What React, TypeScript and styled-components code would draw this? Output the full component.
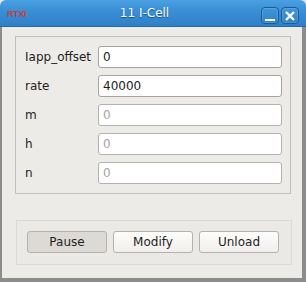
import React from 'react';
import styled, { createGlobalStyle } from 'styled-components';

const GlobalStyle = createGlobalStyle`
  html, body {
    margin: 0;
    padding: 0;
    background: #e4e4e4;
  }
`;

const Window = styled.div`
  width: 306px;
  height: 282px;
  box-sizing: border-box;
  display: flex;
  flex-direction: column;
  font-family: 'DejaVu Sans', sans-serif;
  font-size: 12px;
  color: #1e1e1e;
`;

const TitleBar = styled.div`
  height: 27px;
  flex-shrink: 0;
  position: relative;
  display: flex;
  align-items: center;
  border-radius: 6px 6px 0 0;
  background: linear-gradient(#4aa0e2, #3a8fd5 40%, #2f80c8);
  border-bottom: 1px solid #246aa8;
  box-sizing: border-box;
`;

const Brand = styled.span`
  position: absolute;
  left: 7px;
  top: 9px;
  font-family: 'Liberation Sans', sans-serif;
  font-weight: bold;
  font-size: 9px;
  line-height: 10px;
  letter-spacing: -0.3px;
  color: #cc3b34;
`;

const Title = styled.span`
  flex: 1;
  text-align: center;
  color: #fff;
  font-size: 12px;
  padding-right: 17px;
  text-shadow: 0 1px 1px rgba(0, 0, 0, 0.45);
`;

const TitleButtons = styled.div`
  position: absolute;
  right: 7px;
  top: 7px;
  display: flex;
  gap: 2px;
`;

const TitleButton = styled.div`
  width: 18px;
  height: 17px;
  box-sizing: border-box;
  border: 1px solid #1c5a92;
  border-radius: 4px;
  background: linear-gradient(#3f95da, #2f82c9);
  box-shadow: inset 0 0 0 1px rgba(255, 255, 255, 0.15);
  display: flex;
  align-items: center;
  justify-content: center;
`;

const Body = styled.div`
  flex: 1;
  display: flex;
  flex-direction: column;
  border-style: solid;
  border-color: #8c8c8c;
  border-width: 0 4px 4px 2px;
  padding: 9px 11px 0 13px;
  background: #edebe7;
`;

const ParamGroup = styled.div`
  border: 1px solid #c3c0bb;
  padding: 9px 8px 9px 9px;
  display: flex;
  flex-direction: column;
  gap: 7px;
`;

const ParamRow = styled.div`
  display: flex;
  align-items: center;
`;

const ParamLabel = styled.span`
  width: 73px;
  flex-shrink: 0;
`;

const ParamInput = styled.div<{ $disabled?: boolean }>`
  flex: 1;
  height: 22px;
  box-sizing: border-box;
  border: 1px solid ${(p) => (p.$disabled ? '#b4b1ad' : '#a6a39f')};
  border-radius: 3px;
  background: #fff;
  padding: 0 4px;
  display: flex;
  align-items: center;
  color: ${(p) => (p.$disabled ? '#a3a3a3' : '#1a1a1a')};
`;

const ActionGroup = styled.div`
  margin-top: 26px;
  margin-left: 1px;
  margin-right: -1px;
  border: 1px solid #dcd9d5;
  background: #ebe9e5;
  padding: 10px 12px 11px 10px;
  display: flex;
  gap: 6px;
`;

const ActionButton = styled.div<{ $pressed?: boolean }>`
  flex: 1;
  height: 22px;
  box-sizing: border-box;
  border: 1px solid #b5b2ad;
  border-radius: 3px;
  background: ${(p) =>
    p.$pressed ? '#dddad5' : 'linear-gradient(#fdfdfc, #f1efec)'};
  display: flex;
  align-items: center;
  justify-content: center;
  color: #1e1e1e;
`;

const params = [
  { name: 'Iapp_offset', value: '0' },
  { name: 'rate', value: '40000' },
  { name: 'm', value: '0', disabled: true },
  { name: 'h', value: '0', disabled: true },
  { name: 'n', value: '0', disabled: true },
];

export default function App() {
  return (
    <>
      <GlobalStyle />
      <Window>
        <TitleBar>
          <Brand>RTXI</Brand>
          <Title>11 I-Cell</Title>
          <TitleButtons>
            <TitleButton>
              <svg width="12" height="12" viewBox="0 0 12 12">
                <rect x="1" y="9" width="10" height="2" fill="#fff" />
              </svg>
            </TitleButton>
            <TitleButton>
              <svg width="12" height="12" viewBox="0 0 12 12">
                <path d="M2 2 L10 10 M10 2 L2 10" stroke="#fff" strokeWidth="2.4" />
              </svg>
            </TitleButton>
          </TitleButtons>
        </TitleBar>
        <Body>
          <ParamGroup>
            {params.map((p) => (
              <ParamRow key={p.name}>
                <ParamLabel>{p.name}</ParamLabel>
                <ParamInput $disabled={p.disabled}>{p.value}</ParamInput>
              </ParamRow>
            ))}
          </ParamGroup>
          <ActionGroup>
            <ActionButton $pressed>Pause</ActionButton>
            <ActionButton>Modify</ActionButton>
            <ActionButton>Unload</ActionButton>
          </ActionGroup>
        </Body>
      </Window>
    </>
  );
}
